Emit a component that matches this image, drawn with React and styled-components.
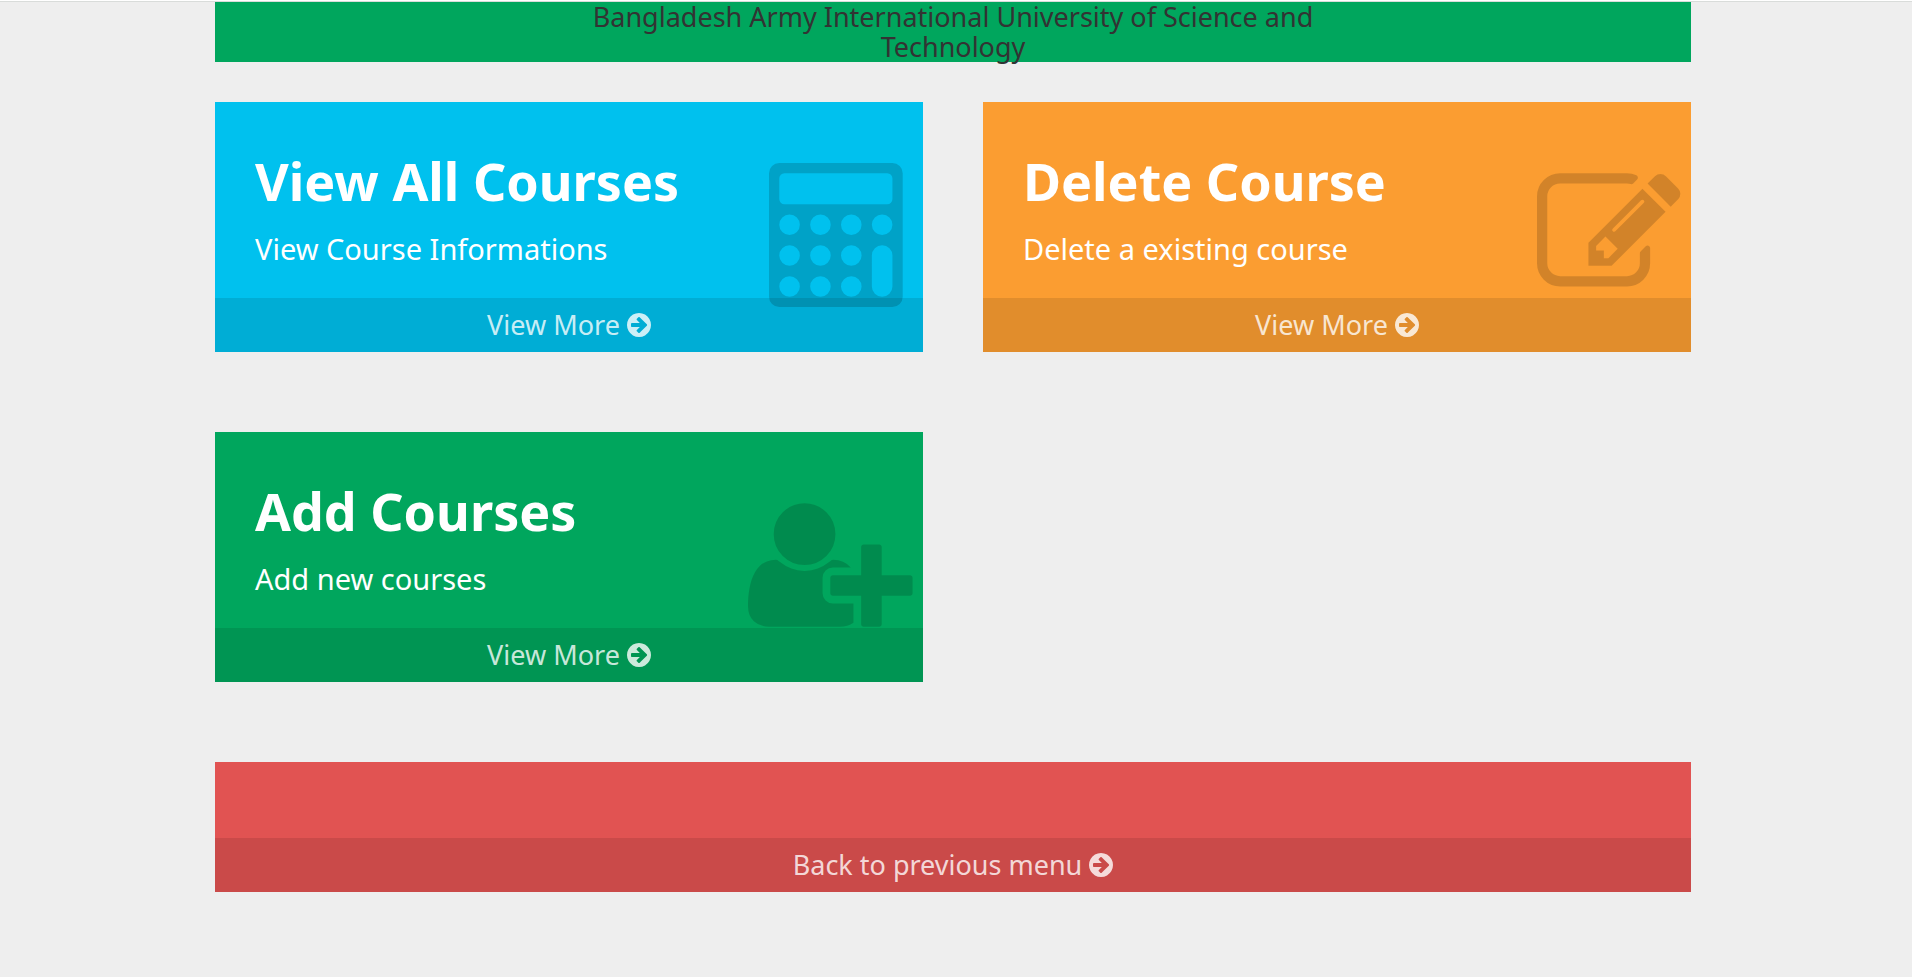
import React from "react";
import styled, { createGlobalStyle } from "styled-components";

const GlobalStyle = createGlobalStyle`
  *, *::before, *::after { box-sizing: border-box; }
  html { background: #eeeeee; }
  body {
    margin: 0;
    font-family: "Noto Sans", "Open Sans", sans-serif;
  }
  h1, h2, p { margin: 0; }
`;

const colors = {
  green: "#00a65d",
  aqua: "#00c1ee",
  orange: "#fb9d31",
  red: "#e15352",
};

const TopEdge = styled.div`
  height: 2px;
  background: #ffffff;
  border-bottom: 1px solid #d9dcda;
`;

const Page = styled.main`
  display: flex;
  flex-direction: column;
  padding: 0 221px 80px 215px;
`;

const Banner = styled.header`
  display: flex;
  justify-content: center;
  margin-bottom: 40px;
  background: ${colors.green};
`;

const BannerTitle = styled.h1`
  width: 50%;
  color: #333333;
  font-size: 27px;
  font-weight: 400;
  line-height: 30px;
  text-align: center;
`;

const CardGrid = styled.section`
  display: grid;
  grid-template-columns: repeat(2, minmax(0, 1fr));
  gap: 80px 60px;
  margin-bottom: 80px;
`;

const CardBox = styled.article`
  position: relative;
  display: flex;
  flex-direction: column;
  background: ${({ $tone }) => colors[$tone]};
  color: #ffffff;
`;

const CardBody = styled.div`
  min-height: 76px;
  padding: ${({ $empty }) => ($empty ? "0" : "48px 40px 28px")};
`;

const CardTitle = styled.h2`
  margin-bottom: 16px;
  font-size: 52px;
  font-weight: 700;
  line-height: 62px;
`;

const CardText = styled.p`
  font-size: 29px;
  line-height: 42px;
`;

const CardIcon = styled.svg`
  position: absolute;
  top: 61px;
  right: 10px;
  height: 144px;
  fill: rgba(0, 0, 0, 0.16);
`;

const CardLink = styled.a`
  position: relative;
  display: flex;
  align-items: center;
  justify-content: center;
  gap: 7px;
  background: rgba(0, 0, 0, 0.1);
  color: rgba(255, 255, 255, 0.8);
  font-size: 27px;
  line-height: 54px;
  text-decoration: none;

  &:hover { color: #ffffff; }
`;

const ArrowSvg = styled.svg`
  width: 24px;
  height: 24px;
  fill: currentColor;
`;

const ArrowCircle = () => (
  <ArrowSvg viewBox="128 128 1536 1536" aria-hidden="true">
    <path d="M1413 896q0-27-18-45l-362-362-91-91q-18-18-45-18t-45 18l-91 91q-18 18-18 45t18 45l189 189h-502q-26 0-45 19t-19 45v128q0 26 19 45t45 19h502l-189 189q-19 19-19 45t19 45l91 91q18 18 45 18t45-18l91-91 362-362q18-18 18-45zm251 0q0 209-103 385.5t-279.5 279.5-385.5 103-385.5-103-279.5-279.5-103-385.5 103-385.5 279.5-279.5 385.5-103 385.5 103 279.5 279.5 103 385.5z" />
  </ArrowSvg>
);

const dot = (cx, cy) => `M${cx - 128} ${cy}a128 128 0 1 0 256 0a128 128 0 1 0-256 0z`;

const calculatorPath = [
  "M128 0H1536a128 128 0 0 1 128 128V1664a128 128 0 0 1-128 128H128a128 128 0 0 1-128-128V128A128 128 0 0 1 128 0z",
  "M192 128H1472a64 64 0 0 1 64 64V448a64 64 0 0 1-64 64H192a64 64 0 0 1-64-64V192a64 64 0 0 1 64-64z",
  "M1280 1152a128 128 0 0 1 256 0V1536a128 128 0 0 1-256 0z",
  dot(256, 768), dot(640, 768), dot(1024, 768), dot(1408, 768),
  dot(256, 1152), dot(640, 1152), dot(1024, 1152),
  dot(256, 1536), dot(640, 1536), dot(1024, 1536),
].join("");

const icons = {
  calculator: { width: 1792, path: calculatorPath },
  edit: {
    width: 1792,
    path: "M888 1184l116-116-152-152-116 116v56h96v96h56zm440-720q-16-16-33 1l-350 350q-17 17-1 33t33-1l350-350q17-17 1-33zm80 594v190q0 119-84.5 203.5t-203.5 84.5h-832q-119 0-203.5-84.5t-84.5-203.5v-832q0-119 84.5-203.5t203.5-84.5h832q63 0 117 25 15 7 18 23 3 17-9 29l-49 49q-14 14-32 8-23-6-45-6h-832q-66 0-113 47t-47 113v832q0 66 47 113t113 47h832q66 0 113-47t47-113v-126q0-13 9-22l64-64q15-15 35-7t20 29zm-96-738l288 288-672 672h-288v-288zm444 132l-92 92-288-288 92-92q28-28 68-28t68 28l152 152q28 28 28 68t-28 68z",
  },
  userPlus: {
    width: 2048,
    path: "M704 896q-159 0-271.5-112.5t-112.5-271.5 112.5-271.5 271.5-112.5 271.5 112.5 112.5 271.5-112.5 271.5-271.5 112.5zm960 128h352q13 0 22.5 9.5t9.5 22.5v192q0 13-9.5 22.5t-22.5 9.5h-352v352q0 13-9.5 22.5t-22.5 9.5h-192q-13 0-22.5-9.5t-9.5-22.5v-352h-352q-13 0-22.5-9.5t-9.5-22.5v-192q0-13 9.5-22.5t22.5-9.5h352v-352q0-13 9.5-22.5t22.5-9.5h192q13 0 22.5 9.5t9.5 22.5v352zm-736 224q0 52 38 90t90 38h256v238q-68 50-171 50h-874q-121 0-194-69t-73-190q0-53 3.5-103.5t14-109 26.5-108.5 43-97.5 62-81 85.5-53.5 111.5-20q19 0 39 17 79 61 154.5 91.5t164.5 30.5 164.5-30.5 154.5-91.5q20-17 39-17 132 0 217 96h-223q-52 0-90 38t-38 90v192z",
  },
};

const cards = [
  { tone: "aqua", title: "View All Courses", text: "View Course Informations", icon: "calculator" },
  { tone: "orange", title: "Delete Course", text: "Delete a existing course", icon: "edit" },
  { tone: "green", title: "Add Courses", text: "Add new courses", icon: "userPlus" },
];

const CourseCard = ({ tone, title, text, icon }) => (
  <CardBox $tone={tone}>
    <CardBody>
      <CardTitle>{title}</CardTitle>
      <CardText>{text}</CardText>
    </CardBody>
    <CardIcon viewBox={`0 0 ${icons[icon].width} 1792`} aria-hidden="true">
      <path fillRule="evenodd" d={icons[icon].path} />
    </CardIcon>
    <CardLink href="#">
      View More
      <ArrowCircle />
    </CardLink>
  </CardBox>
);

export default function App() {
  return (
    <>
      <GlobalStyle />
      <TopEdge />
      <Page>
        <Banner>
          <BannerTitle>Bangladesh Army International University of Science and Technology</BannerTitle>
        </Banner>
        <CardGrid>
          {cards.map((card) => (
            <CourseCard key={card.title} {...card} />
          ))}
        </CardGrid>
        <CardBox $tone="red">
          <CardBody $empty />
          <CardLink href="#">
            Back to previous menu
            <ArrowCircle />
          </CardLink>
        </CardBox>
      </Page>
    </>
  );
}
